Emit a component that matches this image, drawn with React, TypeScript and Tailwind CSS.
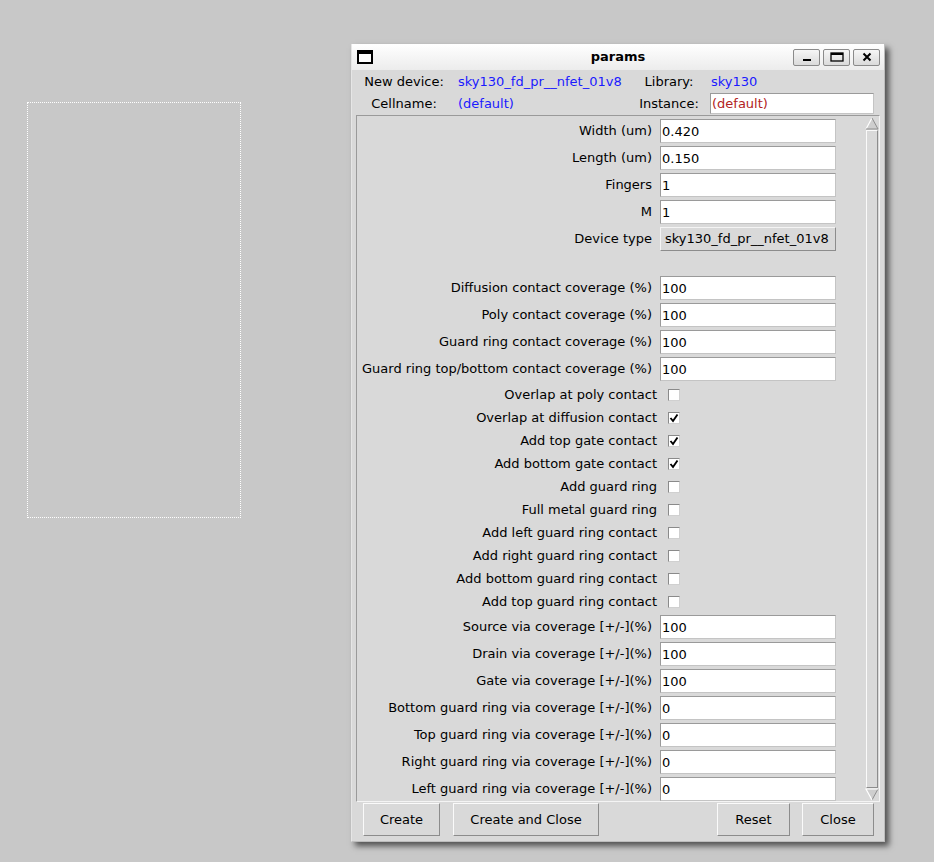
import { useState } from 'react';

// Tk-style parameter dialog for a sky130 nfet device.

const ENTRY_ROWS_A: [string, string][] = [
  ['Width (um)', '0.420'],
  ['Length (um)', '0.150'],
  ['Fingers', '1'],
  ['M', '1'],
];

const ENTRY_ROWS_B: [string, string][] = [
  ['Diffusion contact coverage (%)', '100'],
  ['Poly contact coverage (%)', '100'],
  ['Guard ring contact coverage (%)', '100'],
  ['Guard ring top/bottom contact coverage (%)', '100'],
];

const CHECK_ROWS: [string, boolean][] = [
  ['Overlap at poly contact', false],
  ['Overlap at diffusion contact', true],
  ['Add top gate contact', true],
  ['Add bottom gate contact', true],
  ['Add guard ring', false],
  ['Full metal guard ring', false],
  ['Add left guard ring contact', false],
  ['Add right guard ring contact', false],
  ['Add bottom guard ring contact', false],
  ['Add top guard ring contact', false],
];

const ENTRY_ROWS_C: [string, string][] = [
  ['Source via coverage [+/-](%)', '100'],
  ['Drain via coverage [+/-](%)', '100'],
  ['Gate via coverage [+/-](%)', '100'],
  ['Bottom guard ring via coverage [+/-](%)', '0'],
  ['Top guard ring via coverage [+/-](%)', '0'],
  ['Right guard ring via coverage [+/-](%)', '0'],
  ['Left guard ring via coverage [+/-](%)', '0'],
];

function Entry({ value, className }: { value: string; className?: string }) {
  const [v, setV] = useState(value);
  return (
    <input
      value={v}
      onChange={(e) => setV(e.target.value)}
      className={
        'h-[24px] bg-white pl-[1px] outline-none border border-[#c4c4c4] border-t-[#9a9a9a] border-l-[#9a9a9a] ' +
        (className ?? '')
      }
    />
  );
}

function EntryRow({ label, value }: { label: string; value: string }) {
  return (
    <div className="flex items-center h-[24px] mb-[3px]">
      <div className="w-[295px] text-right whitespace-nowrap">{label}</div>
      <Entry value={value} className="ml-[8px] w-[176px] text-black" />
    </div>
  );
}

function CheckRow({ label, initial }: { label: string; initial: boolean }) {
  const [on, setOn] = useState(initial);
  return (
    <div className="flex items-center h-[23px]">
      <div className="w-[300px] text-right whitespace-nowrap">{label}</div>
      <button
        type="button"
        onClick={() => setOn((o) => !o)}
        className="ml-[11px] w-[12px] h-[12px] bg-white border border-[#d0d0d0] border-t-[#8a8a8a] border-l-[#8a8a8a] flex items-center justify-center"
      >
        {on && (
          <svg width="10" height="10" viewBox="0 0 10 10">
            <polyline points="1.5,5 4,8 8.5,1.5" fill="none" stroke="#000" strokeWidth="1.9" />
          </svg>
        )}
      </button>
    </div>
  );
}

function TkButton({ label, className }: { label: string; className?: string }) {
  return (
    <button
      type="button"
      className={
        'h-[33px] bg-[#d9d9d9] border border-t-[#fafafa] border-l-[#fafafa] border-r-[#8c8c8c] border-b-[#8c8c8c] text-center ' +
        (className ?? '')
      }
    >
      {label}
    </button>
  );
}

function TitleButton({ children }: { children: React.ReactNode }) {
  return (
    <div className="w-[27px] h-[17px] rounded-[2px] border border-[#8a8a8a] bg-linear-to-b from-[#f6f6f6] to-[#dadada] flex items-center justify-center">
      {children}
    </div>
  );
}

function Scrollbar() {
  return (
    <div className="w-[14px] flex flex-col pt-[1px]">
      <svg width="14" height="13" viewBox="0 0 14 13" className="shrink-0">
        <polygon points="7,1 13,12 1,12" fill="#cecece" />
        <polyline points="1,12 7,1" fill="none" stroke="#fff" strokeWidth="1.2" />
        <polyline points="7,1 13,12 1,12" fill="none" stroke="#8e8e8e" strokeWidth="1" />
      </svg>
      <div className="flex-1 mx-[1px] border border-t-[#fafafa] border-l-[#fafafa] border-r-[#8c8c8c] border-b-[#8c8c8c] bg-[#d9d9d9]" />
      <svg width="14" height="13" viewBox="0 0 14 13" className="shrink-0">
        <polygon points="1,1 13,1 7,12" fill="#cecece" />
        <polyline points="13,1 7,12" fill="none" stroke="#8e8e8e" strokeWidth="1" />
        <polyline points="7,12 1,1 13,1" fill="none" stroke="#fff" strokeWidth="1.2" />
      </svg>
    </div>
  );
}

export default function App() {
  return (
    <div className="relative w-[934px] h-[862px] bg-[#c8c8c8] overflow-hidden font-['DejaVu_Sans',sans-serif] text-[13px] text-black">
      {/* rubber-band selection on the layout canvas */}
      <div className="absolute left-[27px] top-[102px] w-[214px] h-[416px] border border-dotted border-white" />

      {/* params window */}
      <div className="absolute left-[351px] top-[44px] w-[534px] h-[798px] bg-[#d9d9d9] border-x border-b border-l-[#e6e6e6] border-r-[#bdbdbd] border-b-[#bdbdbd] shadow-[4px_4px_6px_rgba(0,0,0,0.6)] flex flex-col">
        <div className="h-[26px] shrink-0 bg-linear-to-b from-white to-[#ececec] flex items-center relative">
          <div className="ml-[5px] w-[16px] h-[14px] border-2 border-t-[4px] border-black bg-white" />
          <div className="absolute inset-x-0 text-center font-bold pointer-events-none">params</div>
          <div className="ml-auto mr-[4px] flex gap-[3px]">
            <TitleButton>
              <svg width="10" height="10" viewBox="0 0 10 10">
                <rect x="1" y="7" width="8" height="2" fill="#000" />
              </svg>
            </TitleButton>
            <TitleButton>
              <svg width="14" height="10" viewBox="0 0 14 10">
                <rect x="1" y="1" width="12" height="8" fill="none" stroke="#000" strokeWidth="1.3" />
                <rect x="1" y="1" width="12" height="2" fill="#000" />
              </svg>
            </TitleButton>
            <TitleButton>
              <svg width="10" height="10" viewBox="0 0 10 10">
                <path d="M1.5 1.5 L8.5 8.5 M8.5 1.5 L1.5 8.5" stroke="#000" strokeWidth="2" />
              </svg>
            </TitleButton>
          </div>
        </div>

        <div className="flex items-center h-[23px]">
          <div className="w-[104px] text-center">New device:</div>
          <div className="w-[180px] pl-[2px] text-[#1a1aff]">sky130_fd_pr__nfet_01v8</div>
          <div className="w-[66px] text-center">Library:</div>
          <div className="ml-[9px] text-[#1a1aff]">sky130</div>
        </div>
        <div className="flex items-center h-[21px]">
          <div className="w-[104px] text-center">Cellname:</div>
          <div className="w-[180px] pl-[2px] text-[#1a1aff]">(default)</div>
          <div className="w-[66px] text-center">Instance:</div>
          <Entry value="(default)" className="ml-[8px] w-[164px] !h-[21px] text-[#b22222]" />
        </div>

        <div className="mt-[1px] ml-[4px] w-[524px] h-[687px] shrink-0 flex border border-t-[#9a9a9a] border-l-[#9a9a9a] border-r-[#f4f4f4] border-b-[#f4f4f4]">
          <div className="flex-1 flex flex-col pt-[3px] overflow-hidden">
            {ENTRY_ROWS_A.map(([l, v]) => (
              <EntryRow key={l} label={l} value={v} />
            ))}
            <div className="flex items-center h-[24px] mb-[3px]">
              <div className="w-[295px] text-right whitespace-nowrap">Device type</div>
              <button
                type="button"
                className="ml-[8px] w-[176px] h-[24px] text-left pl-[4px] bg-[#d9d9d9] border border-t-[#f4f4f4] border-l-[#f4f4f4] border-r-[#8c8c8c] border-b-[#8c8c8c]"
              >
                sky130_fd_pr__nfet_01v8
              </button>
            </div>
            <div className="h-[22px] shrink-0" />
            {ENTRY_ROWS_B.map(([l, v]) => (
              <EntryRow key={l} label={l} value={v} />
            ))}
            <div className="flex flex-col -mt-px mb-[2px]">
              {CHECK_ROWS.map(([l, c]) => (
                <CheckRow key={l} label={l} initial={c} />
              ))}
            </div>
            {ENTRY_ROWS_C.map(([l, v]) => (
              <EntryRow key={l} label={l} value={v} />
            ))}
          </div>
          <Scrollbar />
        </div>

        <div className="mt-[1px] h-[33px] flex justify-between pl-[11px] pr-[10px]">
          <div className="flex gap-[13px]">
            <TkButton label="Create" className="w-[77px]" />
            <TkButton label="Create and Close" className="w-[146px]" />
          </div>
          <div className="flex gap-[12px]">
            <TkButton label="Reset" className="w-[73px]" />
            <TkButton label="Close" className="w-[72px]" />
          </div>
        </div>
      </div>
    </div>
  );
}
